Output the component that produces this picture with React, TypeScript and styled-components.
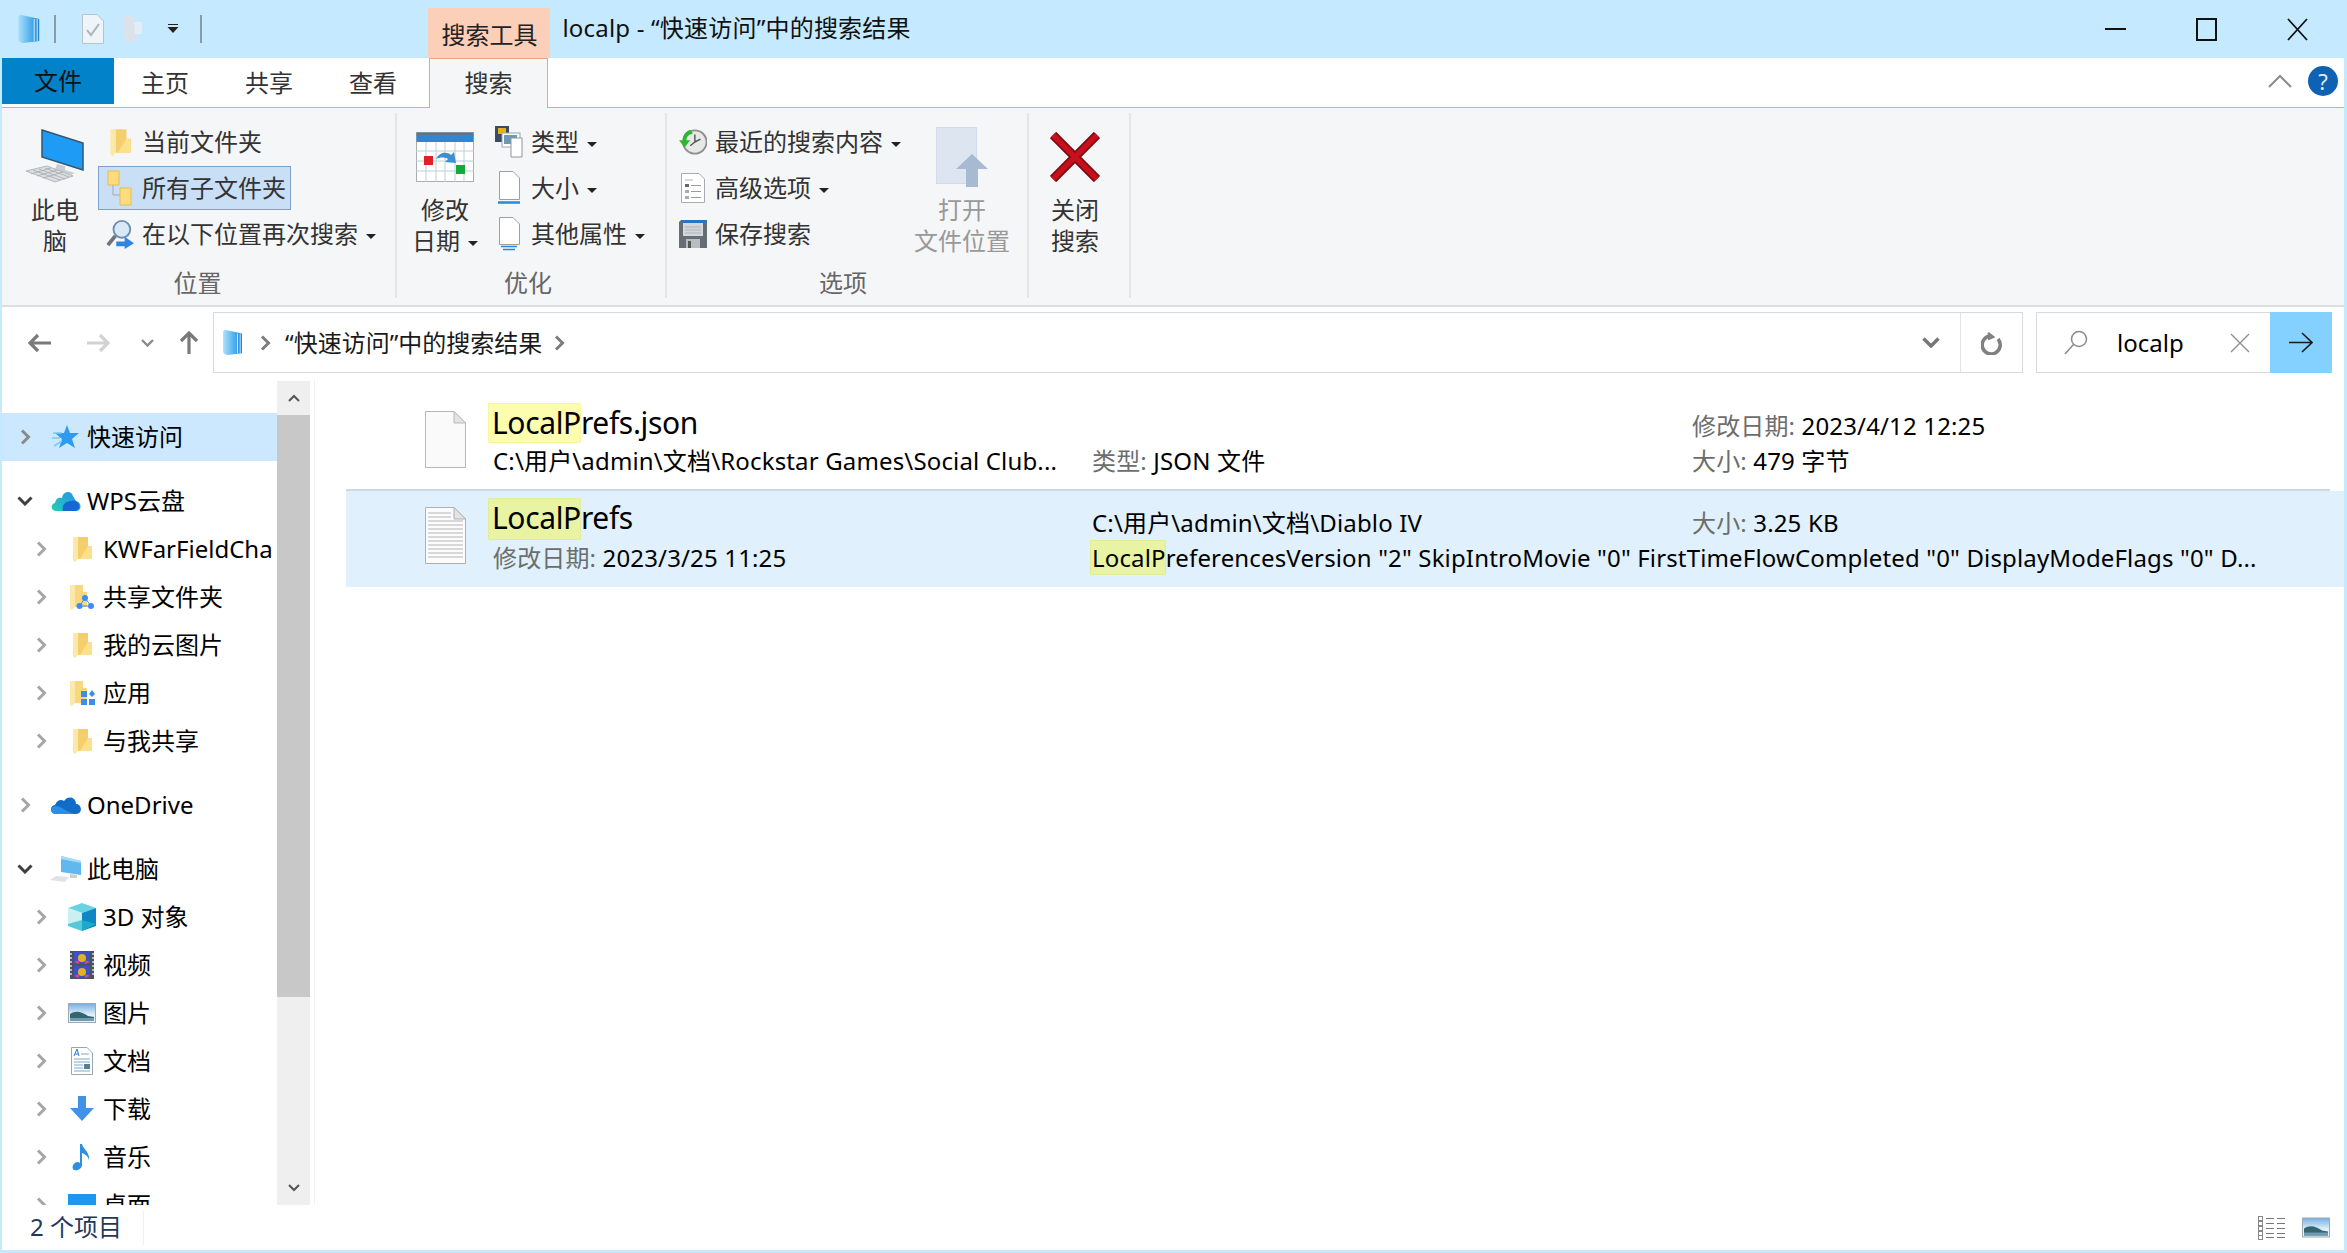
import React from 'react';
import styled, { createGlobalStyle } from 'styled-components';

const GlobalStyle = createGlobalStyle`
  html, body {
    margin: 0;
    padding: 0;
    background: #fff;
    overflow: hidden;
  }
  * {
    box-sizing: border-box;
  }
`;

const Window = styled.div`
  width: 2347px;
  height: 1253px;
  display: flex;
  flex-direction: column;
  overflow: hidden;
  background: #c5e9fe;
  color: #000;
  font-family: 'Noto Sans', 'Noto Sans CJK SC', sans-serif;
  font-size: 24px;
  line-height: 32px;
`;

const TitleBar = styled.div`
  height: 58px;
  flex: none;
  display: flex;
  align-items: center;
  padding-left: 17px;
`;

const TitleSep = styled.span<{ $bare?: boolean }>`
  width: 2px;
  height: 28px;
  background: #8b9ba6;
  margin: ${(p) => (p.$bare ? '0' : '0 26px 0 14px')};
`;

const QatIcon = styled.span<{ $ml?: number }>`
  display: flex;
  margin-left: ${(p) => p.$ml || 0}px;
`;

const ContextTab = styled.div`
  align-self: flex-end;
  width: 122px;
  height: 50px;
  margin-left: 226px;
  background: #fccfb8;
  text-align: center;
  padding-top: 11px;
  color: #222;
`;

const TitleText = styled.div`
  margin-left: 12px;
  margin-bottom: 2px;
  letter-spacing: 0.2px;
  color: #111;
`;

const WinButtons = styled.div`
  margin-left: auto;
  display: flex;
  align-items: center;
  gap: 70px;
  padding-right: 39px;
`;

const Body = styled.div`
  flex: 1;
  min-height: 0;
  margin: 0 3px 3px 2px;
  background: #fff;
  display: flex;
  flex-direction: column;
`;

const TabRow = styled.div`
  height: 50px;
  flex: none;
  display: flex;
  border-bottom: 1px solid #f0a18c;
`;

const FileTab = styled.div`
  width: 112px;
  height: 46px;
  background: #0283c9;
  color: #111;
  text-align: center;
  line-height: 46px;
`;

const Tab = styled.div`
  width: 104px;
  padding-right: 2px;
  text-align: center;
  line-height: 50px;
  color: #333;
`;

const ActiveTab = styled.div`
  width: 119px;
  height: 50px;
  margin-left: 3px;
  background: #f5f6f7;
  border: 1px solid #f0a18c;
  border-bottom: none;
  text-align: center;
  line-height: 48px;
  color: #333;
`;

const TabRight = styled.div`
  margin-left: auto;
  display: flex;
  align-items: center;
  gap: 16px;
  padding: 0 6px 4px 0;
`;

const HelpDot = styled.div`
  width: 30px;
  height: 30px;
  border-radius: 50%;
  background: #0f62b3;
  color: #dfeaf5;
  text-align: center;
  font-size: 22px;
  line-height: 30px;
`;

const Ribbon = styled.div`
  height: 199px;
  flex: none;
  display: flex;
  background: #f5f6f7;
  border-bottom: 2px solid #dcdddf;
  padding-top: 5px;
  color: #333;
`;

const Group = styled.div<{ $w: number }>`
  width: ${(p) => p.$w}px;
  height: 185px;
  padding-top: 6px;
  display: flex;
  flex-direction: column;
  border-right: 2px solid #e4e5e7;
`;

const GroupBody = styled.div`
  height: 150px;
  display: flex;
`;

const GroupLabel = styled.div<{ $pr?: number }>`
  height: 30px;
  line-height: 30px;
  text-align: center;
  padding-right: ${(p) => p.$pr || 0}px;
  color: #666;
`;

const BigButton = styled.div<{ $w: number; $ml: number; $off?: boolean }>`
  width: ${(p) => p.$w}px;
  margin-left: ${(p) => p.$ml}px;
  display: flex;
  flex-direction: column;
  align-items: center;
  color: ${(p) => (p.$off ? '#999' : '#333')};
  line-height: 31px;
  text-align: center;
  white-space: nowrap;
`;

const BigIcon = styled.div`
  height: 75px;
  display: flex;
  align-items: center;
`;

const SmallColumn = styled.div<{ $ml: number; $w?: number }>`
  margin-left: ${(p) => p.$ml}px;
  ${(p) => (p.$w ? `width: ${p.$w}px;` : '')}
  display: flex;
  flex-direction: column;
  align-items: flex-start;
`;

const SmallButton = styled.div<{ $on?: boolean }>`
  height: 44px;
  margin: 1px 0;
  padding: 0 4px 0 7px;
  display: flex;
  align-items: center;
  gap: 8px;
  white-space: nowrap;
  border: 1px solid ${(p) => (p.$on ? '#7da2ce' : 'transparent')};
  background: ${(p) => (p.$on ? '#c8dff6' : 'transparent')};
`;

const SmallIcon = styled.span`
  width: 28px;
  height: 28px;
  display: flex;
  align-items: center;
  justify-content: center;
  flex: none;
`;

const Caret = styled.span`
  display: inline-block;
  width: 0;
  height: 0;
  margin-left: 8px;
  vertical-align: middle;
  border-left: 5px solid transparent;
  border-right: 5px solid transparent;
  border-top: 5px solid #222;
`;

const AddressRow = styled.div`
  height: 73px;
  flex: none;
  display: flex;
  align-items: flex-start;
  padding: 5px 0 0 26px;
`;

const NavButton = styled.span<{ $ml?: number }>`
  height: 61px;
  display: flex;
  align-items: center;
  margin-left: ${(p) => p.$ml || 0}px;
`;

const AddressBox = styled.div`
  width: 1810px;
  height: 61px;
  margin-left: 14px;
  border: 1px solid #d9d9d9;
  display: flex;
  align-items: center;
  padding-left: 8px;
  color: #1a1a1a;
`;

const CrumbArrow = styled.span`
  margin-left: 17px;
  display: flex;
`;

const Crumb = styled.span`
  margin: 0 12px 0 14px;
`;

const AddressEnd = styled.div`
  margin-left: auto;
  display: flex;
  align-items: center;
  height: 100%;
`;

const DropZone = styled.div`
  width: 62px;
  padding-right: 20px;
  display: flex;
  justify-content: flex-end;
`;

const RefreshZone = styled.div`
  width: 62px;
  height: 100%;
  border-left: 1px solid #e3e3e3;
  display: flex;
  align-items: center;
  justify-content: center;
`;

const SearchBox = styled.div`
  width: 296px;
  height: 61px;
  margin-left: 13px;
  border: 1px solid #d9d9d9;
  border-right: none;
  display: flex;
  align-items: center;
  padding-left: 27px;
`;

const SearchText = styled.span`
  margin-left: 29px;
  width: 113px;
`;

const GoButton = styled.div`
  width: 62px;
  height: 61px;
  margin-left: auto;
  background: #84d0fe;
  display: flex;
  align-items: center;
  justify-content: center;
`;

const Main = styled.div`
  flex: 1;
  min-height: 0;
  display: flex;
`;

const Sidebar = styled.div`
  width: 313px;
  flex: none;
  display: flex;
  border-right: 1px solid #f0f0f0;
`;

const NavList = styled.div`
  width: 275px;
  flex: none;
  overflow: hidden;
  padding-top: 33px;
`;

const NavGap = styled.div`
  height: 16px;
`;

const NavRow = styled.div<{ $depth: number; $on?: boolean }>`
  height: 48px;
  display: flex;
  align-items: center;
  padding-left: ${(p) => (p.$depth ? 29 : 13)}px;
  background: ${(p) => (p.$on ? '#cce8ff' : 'transparent')};
  white-space: nowrap;
`;

const Chevron = styled.span`
  width: 20px;
  display: flex;
  justify-content: center;
  flex: none;
`;

const NavIcon = styled.span`
  width: 32px;
  height: 32px;
  margin: 0 5px 0 15px;
  display: flex;
  align-items: center;
  justify-content: center;
  flex: none;
`;

const ScrollBar = styled.div`
  width: 33px;
  flex: none;
  display: flex;
  flex-direction: column;
  background: #efefef;
  margin-top: 1px;
`;

const ScrollEnd = styled.div`
  height: 34px;
  display: flex;
  align-items: center;
  justify-content: center;
`;

const ScrollThumb = styled.div`
  height: 582px;
  background: #c8c8c8;
`;

const ScrollTrack = styled.div`
  flex: 1;
`;

const Results = styled.div`
  flex: 1;
  min-width: 0;
  padding-left: 31px;
`;

const ResultItem = styled.div<{ $on?: boolean }>`
  height: ${(p) => (p.$on ? 96 : 111)}px;
  display: flex;
  align-items: flex-end;
  padding-bottom: ${(p) => (p.$on ? 12 : 11)}px;
  margin-right: ${(p) => (p.$on ? 0 : 14)}px;
  background: ${(p) => (p.$on ? '#e0f0fc' : 'transparent')};
  border-bottom: ${(p) => (p.$on ? 'none' : '2px solid #cdd7e0')};
`;

const FileIconCell = styled.div<{ $on?: boolean }>`
  width: 147px;
  flex: none;
  align-self: flex-start;
  padding: ${(p) => (p.$on ? '16px' : '31px')} 0 0 79px;
  display: flex;
`;

const NameCol = styled.div`
  width: 599px;
  flex: none;
`;

const FileName = styled.div`
  display: flex;
  align-items: flex-start;
  font-size: 30px;
  line-height: 40px;
  letter-spacing: -0.35px;
  white-space: nowrap;
  margin-left: -5px;
`;

const NameHit = styled.span<{ $on?: boolean }>`
  height: ${(p) => (p.$on ? 42 : 40)}px;
  padding-left: 4px;
  border-radius: 2px;
  background: ${(p) => (p.$on ? '#e9f3a4' : '#fdfdb0')};
  box-shadow: inset 0 0 0 1px ${(p) => (p.$on ? '#e2eb96' : '#f6f69a')};
`;

const Line = styled.div`
  height: 35px;
  line-height: 35px;
  letter-spacing: 0.15px;
  white-space: nowrap;
`;

const Key = styled.span`
  color: #6d6d6d;
`;

const Col = styled.div<{ $w?: number }>`
  ${(p) => (p.$w ? `width: ${p.$w}px; flex: none;` : '')}
`;

const SnippetHit = styled.span`
  display: inline-block;
  height: 35px;
  margin-left: -2px;
  padding-left: 2px;
  border-radius: 2px;
  background: #e9f3a4;
  box-shadow: inset 0 0 0 1px #e2eb96;
`;

const StatusBar = styled.div`
  height: 45px;
  flex: none;
  display: flex;
  align-items: center;
  padding-left: 28px;
  color: #1e395b;
`;

const StatusCount = styled.span`
  width: 114px;
  height: 34px;
  border-right: 1px solid #f1f1f1;
`;

const ViewButtons = styled.div`
  margin-left: auto;
  display: flex;
  align-items: center;
  gap: 16px;
  padding-right: 14px;
`;

/* ---- drawings ---- */

const LibraryIcon: React.FC<{ size?: number }> = ({ size = 30 }) => (
  <svg width={size * 0.78} height={size} viewBox="0 0 23 30">
    <defs>
      <linearGradient id="lib" x1="0" x2="1" y1="0" y2="0">
        <stop offset="0" stopColor="#aee0fb" />
        <stop offset="0.7" stopColor="#3fa6ea" />
        <stop offset="1" stopColor="#1f80d0" />
      </linearGradient>
    </defs>
    <path d="M1 3 Q1 1 4 1 L22 5 V27 L6 29 Q1 28 1 25Z" fill="url(#lib)" />
    <path d="M17 5V27M20 5V27" stroke="#d5efff" strokeWidth="1" />
  </svg>
);

const FolderIcon: React.FC<{ w?: number; h?: number }> = ({ w = 20, h = 28 }) => (
  <svg width={w} height={h} viewBox="0 0 20 28">
    <path d="M1 2 H6 L6 24 L3 27 L1 26Z" fill="#fbe8ab" />
    <path d="M6 2 H16 V11 H20 V24 H6Z" fill="#f5cf6c" />
    <path d="M16 11 H20 V24 H8Z" fill="#fde08c" />
  </svg>
);

const SharedFolderIcon = () => (
  <svg width="28" height="28" viewBox="0 0 28 28">
    <path d="M2 2 H7 V24 L4 27 L2 26Z" fill="#fbe8ab" />
    <path d="M7 2 H15 V9 H19 V24 H7Z" fill="#f8d77f" />
    <circle cx="17" cy="15" r="3" fill="#3b8ef0" />
    <circle cx="11.5" cy="23" r="3" fill="#3b8ef0" />
    <circle cx="23" cy="23" r="3" fill="#3b8ef0" />
    <path d="M17 15 L11.5 23 H23Z" fill="none" stroke="#3b8ef0" />
  </svg>
);

const AppsFolderIcon = () => (
  <svg width="28" height="28" viewBox="0 0 28 28">
    <path d="M2 2 H7 V24 L4 27 L2 26Z" fill="#fbe8ab" />
    <path d="M7 2 H15 V9 H19 V24 H7Z" fill="#f8d77f" />
    <rect x="13" y="12" width="6" height="6" fill="#3b8ef0" />
    <path d="M24 11 L27 15 L24 18 L21 15Z" fill="#3b8ef0" />
    <rect x="13" y="20" width="6" height="6" fill="#3b8ef0" />
    <rect x="21" y="20" width="6" height="6" fill="#3b8ef0" />
  </svg>
);

const Star = () => (
  <svg width="28" height="26" viewBox="0 0 28 26">
    <path d="M15 1 L18 9 L27 9 L20 15 L23 24 L15 19 L7 24 L10 15 L3 9 L12 9Z" fill="#2e9bf0" />
    <path d="M1 9 H10 M0 14 H8 M2 22 L10 17" stroke="#7cc7f7" strokeWidth="1.5" />
  </svg>
);

const WpsCloud = () => (
  <svg width="30" height="22" viewBox="0 0 30 22">
    <defs>
      <linearGradient id="wps" x1="0" x2="1" y1="1" y2="0">
        <stop offset="0" stopColor="#1fd1b0" />
        <stop offset="1" stopColor="#2a8bf2" />
      </linearGradient>
    </defs>
    <path d="M5 21 C0 21 -1 14 4 13 C5 8 8 7 11 8 C12 1 20 0 22 6 C24 9 24 10 25 11 C31 12 31 21 25 21Z" fill="url(#wps)" />
    <path d="M12 21 C10 14 16 11 20 11 C24 9 30 13 28 19 L25 21Z" fill="#1467d6" />
  </svg>
);

const OneDriveCloud = () => (
  <svg width="32" height="20" viewBox="0 0 32 20">
    <path d="M6 19 C0 19 -1 11 5 10 C7 5 11 4 14 6 C18 0 26 2 26 9 C32 9 33 19 26 19Z" fill="#0f6cc7" />
    <path d="M6 19 C0 19 -1 12 5 11 C9 11 12 13 15 15 L24 19Z" fill="#2b8fe3" />
  </svg>
);

const PcSmall = () => (
  <svg width="32" height="28" viewBox="0 0 32 28">
    <path d="M11 1 L31 6 V20 L11 17Z" fill="#5fb8ee" />
    <path d="M11 1 L31 6 V8 L11 4Z" fill="#a8dcf7" />
    <path d="M20 19 L27 20 V23 H20Z" fill="#c9cfd4" />
    <path d="M6 21 L19 22 L15 27 L0 25Z" fill="#dfe3e6" />
  </svg>
);

const Cube = () => (
  <svg width="30" height="30" viewBox="0 0 30 30">
    <path d="M15 1 L29 6 L15 11 L1 6Z" fill="#6ad3e3" />
    <path d="M1 6 L15 11 V29 L1 24Z" fill="#c9f1f2" />
    <path d="M15 11 L29 6 V24 L15 29Z" fill="#0f87c5" />
    <path d="M1 22 L15 18 L29 22 L15 29 L1 24Z" fill="#24b7cf" opacity="0.7" />
  </svg>
);

const VideoIcon = () => (
  <svg width="24" height="28" viewBox="0 0 24 28">
    <rect width="24" height="28" fill="#4c5061" />
    <rect x="4" y="1" width="16" height="12" fill="#3c50c8" />
    <rect x="4" y="15" width="16" height="12" fill="#3c50c8" />
    <circle cx="12" cy="7" r="4" fill="#e3b31e" />
    <circle cx="12" cy="21" r="4" fill="#e3b31e" />
    <path d="M4 11 L9 9 L9 13Z M20 11 L15 9 V13Z M4 25 L9 23 V27Z M20 25 L15 23 V27Z" fill="#d8497a" />
    <path d="M1 2V26 M23 2V26" stroke="#d8dce2" strokeWidth="1.5" strokeDasharray="2 2" />
  </svg>
);

const PictureIcon: React.FC<{ w?: number; h?: number }> = ({ w = 28, h = 20 }) => (
  <svg width={w} height={h} viewBox="0 0 28 20">
    <defs>
      <linearGradient id="sky" x1="0" x2="0" y1="0" y2="1">
        <stop offset="0" stopColor="#76aee6" />
        <stop offset="0.6" stopColor="#e3f1f8" />
      </linearGradient>
    </defs>
    <rect x="0.5" y="0.5" width="27" height="19" fill="url(#sky)" stroke="#9fa9b3" />
    <path d="M2 11 C8 7 14 9 20 13 L26 14 V18 H2Z" fill="#37656f" />
    <path d="M2 15 H26 V18 H2Z" fill="#6d9cb4" />
  </svg>
);

const DocIcon = () => (
  <svg width="22" height="28" viewBox="0 0 22 28">
    <path d="M0.5 0.5 H16 L21.5 6 V27.5 H0.5Z" fill="#fff" stroke="#9aa5ad" />
    <path d="M3 9 L6 2 L8 9 M4 7 H7" fill="none" stroke="#2b7bd0" />
    <path d="M10 7 H18 M3 12 H19 M3 15 H19 M3 18 H12 M3 21 H12 M3 24 H19" stroke="#7aa6cf" />
    <rect x="13" y="17" width="6" height="5" fill="#567f93" />
  </svg>
);

const DownloadIcon = () => (
  <svg width="26" height="26" viewBox="0 0 26 26">
    <path d="M9 0 H17 V12 H25 L13 25 L1 12 H9Z" fill="#3f93e6" />
  </svg>
);

const MusicIcon = () => (
  <svg width="20" height="28" viewBox="0 0 20 28">
    <path d="M8 1 L10 1 C11 6 18 9 17 17 C16 13 13 11 10 10 V22 C10 26 5 28 2 27 C-1 25 1 20 5 19 C6 19 7 19 8 20Z" fill="#2c8fe0" />
  </svg>
);

const DesktopIcon = () => (
  <svg width="28" height="22" viewBox="0 0 28 22">
    <rect width="28" height="22" fill="#1f97ee" />
  </svg>
);

const ChevronGlyph: React.FC<{ open?: boolean; color: string }> = ({ open, color }) =>
  open ? (
    <svg width="16" height="10" viewBox="0 0 16 10">
      <path d="M1.5 1.5 L8 8 L14.5 1.5" fill="none" stroke={color} strokeWidth="3" />
    </svg>
  ) : (
    <svg width="11" height="16" viewBox="0 0 11 16">
      <path d="M2 1.5 L8.5 8 L2 14.5" fill="none" stroke={color} strokeWidth="3" />
    </svg>
  );

const FileBlank = () => (
  <svg width="41" height="57" viewBox="0 0 41 57">
    <path d="M0.5 0.5 H29 L40.5 12 V56.5 H0.5Z" fill="#fafafa" stroke="#b8b8b8" />
    <path d="M29 0.5 V12 H40.5Z" fill="#e4e4e4" stroke="#b8b8b8" />
  </svg>
);

const FileLines = () => (
  <svg width="41" height="57" viewBox="0 0 41 57">
    <path d="M0.5 0.5 H29 L40.5 12 V56.5 H0.5Z" fill="#fbfbfb" stroke="#b0b0b0" />
    <path d="M29 0.5 V12 H40.5Z" fill="#e4e4e4" stroke="#b0b0b0" />
    {[6, 10, 14, 18, 22, 26, 30, 34, 38, 42, 46, 50].map((y) => (
      <path key={y} d={y < 14 ? `M3 ${y} H26` : `M3 ${y} H38`} stroke="#b5b5b5" />
    ))}
  </svg>
);

const PcBig = () => (
  <svg width="60" height="55" viewBox="0 0 60 55">
    <path d="M17 1 L58 14 V41 L17 28Z" fill="#1e9bf5" stroke="#33566f" strokeWidth="1.5" />
    <path d="M32 35 L40 37 V41 L50 44 L46 46 L30 41 Z" fill="#c9ced2" />
    <path d="M1 42 L22 37 L48 47 L30 53Z" fill="#dcdfe2" stroke="#b4b8bc" />
    <path d="M8 41 L35 51 M14 40 L40 50 M20 39 L44 48 M6 45 L26 39 M12 47 L32 41 M18 49 L38 43" stroke="#a4a9ae" strokeWidth="0.8" />
  </svg>
);

const CurrentFolder = () => <FolderIcon w={22} h={30} />;

const SubFolders = () => (
  <svg width="26" height="36" viewBox="0 0 26 36">
    <path d="M1 1 H12 V15 H1Z" fill="#fddc7d" stroke="#e2bf55" />
    <path d="M6 15 V25 H13" fill="none" stroke="#a9a9a9" />
    <path d="M13 18 H24 V35 H13Z" fill="#fddc7d" stroke="#e2bf55" />
  </svg>
);

const SearchAgain = () => (
  <svg width="30" height="32" viewBox="0 0 30 32">
    <circle cx="17" cy="11" r="9" fill="#d8e8f6" stroke="#6b8fb0" strokeWidth="2" />
    <path d="M10 18 L2 28" stroke="#6d7379" strokeWidth="4" />
    <path d="M11 24 H20 V19 L30 26 L20 32 V29 H11Z" fill="#2e86e0" />
  </svg>
);

const CalendarIcon = () => (
  <svg width="58" height="50" viewBox="0 0 58 50">
    <rect x="0.5" y="0.5" width="57" height="49" fill="#fff" stroke="#a8adb0" />
    <rect x="0.5" y="0.5" width="57" height="3" fill="#5d7588" />
    <rect x="0.5" y="3" width="57" height="7" fill="#2f86d6" />
    <path d="M10 10V50M20 10V50M29 10V50M39 10V50M48 10V50M0 19H58M0 29H58M0 39H58" stroke="#bcd0d6" />
    <rect x="8" y="24" width="9" height="9" fill="#e21f26" />
    <rect x="40" y="33" width="9" height="9" fill="#16a83a" />
    <path d="M20 27 C24 19 32 20 35 23 L38 20 L40 31 L29 30 L32 27 C29 25 24 25 20 27Z" fill="#3f8fd0" />
  </svg>
);

const TypeIcon = () => (
  <svg width="28" height="32" viewBox="0 0 28 32">
    <rect x="0" y="0" width="14" height="16" fill="#3c4a6a" />
    <rect x="3" y="2" width="8" height="6" fill="#e3b31e" />
    <rect x="7" y="7" width="18" height="14" fill="#fff" stroke="#9aa5ad" />
    <rect x="9" y="9" width="13" height="9" fill="#6f98b4" />
    <path d="M16 12 H27 V31 H16Z" fill="#fff" stroke="#8f979e" />
  </svg>
);

const SizeIcon = () => (
  <svg width="24" height="34" viewBox="0 0 24 34">
    <path d="M2.5 0.5 H16 L22.5 7 V28.5 H2.5Z" fill="#fff" stroke="#9aa0a5" />
    <path d="M1 31.5 H23" stroke="#2e86d8" strokeWidth="2.5" />
  </svg>
);

const OtherIcon = () => (
  <svg width="22" height="34" viewBox="0 0 22 34">
    <path d="M1.5 0.5 H15 L21.5 7 V27.5 H1.5Z" fill="#fff" stroke="#9aa0a5" />
    <path d="M3 29.5 H19 M5 32.5 H17" stroke="#2e86d8" strokeWidth="1.5" />
  </svg>
);

const RecentIcon = () => (
  <svg width="30" height="28" viewBox="0 0 30 28">
    <circle cx="17" cy="14" r="12.5" fill="#e8e8e8" stroke="#8f8f8f" strokeWidth="2" />
    <path d="M17 6 V14 L23 11 M17 14 L12 18" fill="none" stroke="#555" strokeWidth="1.5" />
    <path d="M12 1 L15 5 C10 6 8 9 8 12 H12 L6 20 L0 12 H4 C4 7 7 3 12 1Z" fill="#2fb52f" />
  </svg>
);

const AdvancedIcon = () => (
  <svg width="24" height="30" viewBox="0 0 24 30">
    <path d="M0.5 0.5 H18 L23.5 6 V29.5 H0.5Z" fill="#fff" stroke="#a8adb2" />
    <path d="M4 7 H12" stroke="#b5b5b5" />
    <rect x="4" y="11" width="4" height="3" fill="#666" />
    <rect x="4" y="17" width="4" height="3" fill="#aaa" />
    <rect x="4" y="23" width="4" height="3" fill="#aaa" />
    <path d="M10 12.5 H20 M10 18.5 H20 M10 24.5 H20" stroke="#9a9a9a" />
  </svg>
);

const SaveIcon = () => (
  <svg width="28" height="28" viewBox="0 0 28 28">
    <path d="M2 0 H28 V28 H0 V2Z" fill="#666d75" />
    <rect x="2" y="0" width="26" height="3" fill="#2a74c4" />
    <rect x="4" y="3" width="20" height="13" fill="#d3d6da" />
    <path d="M6 7 H22 M6 10 H22 M6 13 H22" stroke="#aeb3b8" />
    <rect x="7" y="19" width="14" height="9" fill="#b9bcc0" />
    <rect x="9" y="21" width="3" height="7" fill="#555" />
  </svg>
);

const OpenLocation = () => (
  <svg width="52" height="60" viewBox="0 0 52 60">
    <rect x="0.5" y="0.5" width="40" height="56" fill="#dde5f1" stroke="#d2dbea" />
    <path d="M36 27 L52 42 H42 V60 H30 V42 H20Z" fill="#a8b9d2" />
  </svg>
);

const CloseBig = () => (
  <svg width="50" height="50" viewBox="0 0 50 50">
    <path d="M3 3 L47 47 M47 3 L3 47" stroke="#7a0a12" strokeWidth="9" />
    <path d="M3 3 L47 47 M47 3 L3 47" stroke="#c80f1c" strokeWidth="5.5" />
  </svg>
);

const Qat = {
  Check: () => (
    <svg width="22" height="30" viewBox="0 0 22 30">
      <path d="M0.5 0.5 H15 L21.5 7 V29.5 H0.5Z" fill="#eef4f8" stroke="#b9c3cb" />
      <path d="M5 16 L9 21 L17 10" fill="none" stroke="#a9b4bc" strokeWidth="2" />
    </svg>
  ),
  Pin: () => (
    <svg width="23" height="30" viewBox="0 0 23 30">
      <path d="M1 2 H12 L14 28 H3Z" fill="#dbe2ea" />
      <path d="M12 8 H20 V20 H13Z" fill="#e5ecf3" />
    </svg>
  ),
  Drop: () => (
    <svg width="12" height="10" viewBox="0 0 12 10">
      <path d="M1 0.5 H11" stroke="#222" />
      <path d="M0.5 3 H11.5 L6 9Z" fill="#222" />
    </svg>
  ),
};

const ArrowLeft: React.FC<{ color: string; flip?: boolean }> = ({ color, flip }) => (
  <svg width="24" height="20" viewBox="0 0 24 20">
    <g transform={flip ? 'translate(24 0) scale(-1 1)' : undefined}>
      <path d="M10 2 L2 10 L10 18 M2 10 H23" fill="none" stroke={color} strokeWidth="3.2" />
    </g>
  </svg>
);

const ArrowUp = () => (
  <svg width="20" height="23" viewBox="0 0 20 23">
    <path d="M2 10 L10 2 L18 10 M10 2 V23" fill="none" stroke="#7a7a7a" strokeWidth="3.2" />
  </svg>
);

const Refresh = () => (
  <svg width="22" height="24" viewBox="0 0 22 24">
    <path d="M7 2 L12 6 L7 8" fill="none" stroke="#808080" strokeWidth="2.5" />
    <path d="M9 5 A9 9 0 1 0 17 8" fill="none" stroke="#808080" strokeWidth="3.5" />
  </svg>
);

const navItems: {
  label: string;
  icon: React.ReactNode;
  depth: number;
  open?: boolean;
  on?: boolean;
  gapBefore?: boolean;
  chevron: string;
}[] = [
  { label: '快速访问', icon: <Star />, depth: 0, on: true, chevron: '#8a8a8a' },
  { label: 'WPS云盘', icon: <WpsCloud />, depth: 0, open: true, gapBefore: true, chevron: '#404040' },
  { label: 'KWFarFieldCha', icon: <FolderIcon />, depth: 1, chevron: '#a6a6a6' },
  { label: '共享文件夹', icon: <SharedFolderIcon />, depth: 1, chevron: '#a6a6a6' },
  { label: '我的云图片', icon: <FolderIcon />, depth: 1, chevron: '#a6a6a6' },
  { label: '应用', icon: <AppsFolderIcon />, depth: 1, chevron: '#a6a6a6' },
  { label: '与我共享', icon: <FolderIcon />, depth: 1, chevron: '#a6a6a6' },
  { label: 'OneDrive', icon: <OneDriveCloud />, depth: 0, gapBefore: true, chevron: '#a6a6a6' },
  { label: '此电脑', icon: <PcSmall />, depth: 0, open: true, gapBefore: true, chevron: '#404040' },
  { label: '3D 对象', icon: <Cube />, depth: 1, chevron: '#a6a6a6' },
  { label: '视频', icon: <VideoIcon />, depth: 1, chevron: '#a6a6a6' },
  { label: '图片', icon: <PictureIcon />, depth: 1, chevron: '#a6a6a6' },
  { label: '文档', icon: <DocIcon />, depth: 1, chevron: '#a6a6a6' },
  { label: '下载', icon: <DownloadIcon />, depth: 1, chevron: '#a6a6a6' },
  { label: '音乐', icon: <MusicIcon />, depth: 1, chevron: '#a6a6a6' },
  { label: '桌面', icon: <DesktopIcon />, depth: 1, chevron: '#a6a6a6' },
];

const App: React.FC = () => (
  <Window>
    <GlobalStyle />
    <TitleBar>
      <LibraryIcon />
      <TitleSep />
      <Qat.Check />
      <QatIcon $ml={18}>
        <Qat.Pin />
      </QatIcon>
      <QatIcon $ml={22}>
        <Qat.Drop />
      </QatIcon>
      <QatIcon $ml={21}>
        <TitleSep $bare />
      </QatIcon>
      <ContextTab>搜索工具</ContextTab>
      <TitleText>localp - “快速访问”中的搜索结果</TitleText>
      <WinButtons>
        <svg width="21" height="2" viewBox="0 0 21 2">
          <rect width="21" height="2" fill="#111" />
        </svg>
        <svg width="21" height="23" viewBox="0 0 21 23">
          <rect x="1" y="1" width="19" height="21" fill="none" stroke="#111" strokeWidth="2" />
        </svg>
        <svg width="21" height="23" viewBox="0 0 21 23">
          <path d="M1 1 L20 22 M20 1 L1 22" stroke="#111" strokeWidth="1.8" />
        </svg>
      </WinButtons>
    </TitleBar>
    <Body>
      <TabRow>
        <FileTab>文件</FileTab>
        <Tab>主页</Tab>
        <Tab>共享</Tab>
        <Tab>查看</Tab>
        <ActiveTab>搜索</ActiveTab>
        <TabRight>
          <svg width="24" height="14" viewBox="0 0 24 14">
            <path d="M1 13 L12 2 L23 13" fill="none" stroke="#8c8c8c" strokeWidth="2" />
          </svg>
          <HelpDot>?</HelpDot>
        </TabRight>
      </TabRow>
      <Ribbon>
        <Group $w={395}>
          <GroupBody>
            <BigButton $w={70} $ml={18}>
              <BigIcon>
                <PcBig />
              </BigIcon>
              此电
              <br />脑
            </BigButton>
            <SmallColumn $ml={8}>
              <SmallButton>
                <SmallIcon>
                  <CurrentFolder />
                </SmallIcon>
                当前文件夹
              </SmallButton>
              <SmallButton $on>
                <SmallIcon>
                  <SubFolders />
                </SmallIcon>
                所有子文件夹
              </SmallButton>
              <SmallButton>
                <SmallIcon>
                  <SearchAgain />
                </SmallIcon>
                <span>
                  在以下位置再次搜索
                  <Caret />
                </span>
              </SmallButton>
            </SmallColumn>
          </GroupBody>
          <GroupLabel $pr={2}>位置</GroupLabel>
        </Group>
        <Group $w={270}>
          <GroupBody>
            <BigButton $w={76} $ml={10}>
              <BigIcon>
                <CalendarIcon />
              </BigIcon>
              修改
              <span>
                日期
                <Caret />
              </span>
            </BigButton>
            <SmallColumn $ml={4}>
              <SmallButton>
                <SmallIcon>
                  <TypeIcon />
                </SmallIcon>
                <span>
                  类型
                  <Caret />
                </span>
              </SmallButton>
              <SmallButton>
                <SmallIcon>
                  <SizeIcon />
                </SmallIcon>
                <span>
                  大小
                  <Caret />
                </span>
              </SmallButton>
              <SmallButton>
                <SmallIcon>
                  <OtherIcon />
                </SmallIcon>
                <span>
                  其他属性
                  <Caret />
                </span>
              </SmallButton>
            </SmallColumn>
          </GroupBody>
          <GroupLabel $pr={6}>优化</GroupLabel>
        </Group>
        <Group $w={362}>
          <GroupBody>
            <SmallColumn $ml={4} $w={236}>
              <SmallButton>
                <SmallIcon>
                  <RecentIcon />
                </SmallIcon>
                <span>
                  最近的搜索内容
                  <Caret />
                </span>
              </SmallButton>
              <SmallButton>
                <SmallIcon>
                  <AdvancedIcon />
                </SmallIcon>
                <span>
                  高级选项
                  <Caret />
                </span>
              </SmallButton>
              <SmallButton>
                <SmallIcon>
                  <SaveIcon />
                </SmallIcon>
                保存搜索
              </SmallButton>
            </SmallColumn>
            <BigButton $w={110} $ml={0} $off>
              <BigIcon>
                <OpenLocation />
              </BigIcon>
              打开
              <br />
              文件位置
            </BigButton>
          </GroupBody>
          <GroupLabel $pr={8}>选项</GroupLabel>
        </Group>
        <Group $w={102}>
          <GroupBody>
            <BigButton $w={92} $ml={0}>
              <BigIcon>
                <CloseBig />
              </BigIcon>
              关闭
              <br />
              搜索
            </BigButton>
          </GroupBody>
        </Group>
      </Ribbon>
      <AddressRow>
        <NavButton>
          <ArrowLeft color="#7a7a7a" />
        </NavButton>
        <NavButton $ml={34}>
          <ArrowLeft color="#d2d2d2" flip />
        </NavButton>
        <NavButton $ml={31}>
          <svg width="13" height="8" viewBox="0 0 13 8">
            <path d="M1 1 L6.5 6.5 L12 1" fill="none" stroke="#8a8a8a" strokeWidth="2.4" />
          </svg>
        </NavButton>
        <NavButton $ml={25}>
          <ArrowUp />
        </NavButton>
        <AddressBox>
          <LibraryIcon size={27} />
          <CrumbArrow>
            <ChevronGlyph color="#7d7d7d" />
          </CrumbArrow>
          <Crumb>“快速访问”中的搜索结果</Crumb>
          <ChevronGlyph color="#7d7d7d" />
          <AddressEnd>
            <DropZone>
              <svg width="18" height="11" viewBox="0 0 18 11">
                <path d="M1.5 1.5 L9 9 L16.5 1.5" fill="none" stroke="#777" strokeWidth="3.5" />
              </svg>
            </DropZone>
            <RefreshZone>
              <Refresh />
            </RefreshZone>
          </AddressEnd>
        </AddressBox>
        <SearchBox>
          <svg width="24" height="25" viewBox="0 0 24 25">
            <circle cx="15" cy="9" r="7.5" fill="none" stroke="#8a8a8a" strokeWidth="1.5" />
            <path d="M9.5 14.5 L1 24" stroke="#8a8a8a" strokeWidth="1.5" />
          </svg>
          <SearchText>localp</SearchText>
          <svg width="20" height="20" viewBox="0 0 20 20">
            <path d="M1 1 L19 19 M19 1 L1 19" stroke="#8f8f8f" strokeWidth="1.4" />
          </svg>
          <GoButton>
            <svg width="24" height="21" viewBox="0 0 24 21">
              <path d="M13 1 L23 10.5 L13 20 M23 10.5 H0" fill="none" stroke="#1a1a1a" strokeWidth="1.6" />
            </svg>
          </GoButton>
        </SearchBox>
      </AddressRow>
      <Main>
        <Sidebar>
          <NavList>
            {navItems.map((item) => (
              <React.Fragment key={item.label}>
                {item.gapBefore && <NavGap />}
                <NavRow $depth={item.depth} $on={item.on}>
                  <Chevron>
                    <ChevronGlyph open={item.open} color={item.chevron} />
                  </Chevron>
                  <NavIcon>{item.icon}</NavIcon>
                  {item.label}
                </NavRow>
              </React.Fragment>
            ))}
          </NavList>
          <ScrollBar>
            <ScrollEnd>
              <svg width="12" height="8" viewBox="0 0 12 8">
                <path d="M1 7 L6 2 L11 7" fill="none" stroke="#555" strokeWidth="2" />
              </svg>
            </ScrollEnd>
            <ScrollThumb />
            <ScrollTrack />
            <ScrollEnd>
              <svg width="12" height="8" viewBox="0 0 12 8">
                <path d="M1 1 L6 6 L11 1" fill="none" stroke="#555" strokeWidth="2" />
              </svg>
            </ScrollEnd>
          </ScrollBar>
        </Sidebar>
        <Results>
          <ResultItem>
            <FileIconCell>
              <FileBlank />
            </FileIconCell>
            <NameCol>
              <FileName>
                <NameHit>LocalP</NameHit>
                <span>refs.json</span>
              </FileName>
              <Line>C:\用户\admin\文档\Rockstar Games\Social Club...</Line>
            </NameCol>
            <Col $w={600}>
              <Line>
                <Key>类型:</Key> JSON 文件
              </Line>
            </Col>
            <Col>
              <Line>
                <Key>修改日期:</Key> 2023/4/12 12:25
              </Line>
              <Line>
                <Key>大小:</Key> 479 字节
              </Line>
            </Col>
          </ResultItem>
          <ResultItem $on>
            <FileIconCell $on>
              <FileLines />
            </FileIconCell>
            <NameCol>
              <FileName>
                <NameHit $on>LocalP</NameHit>
                <span>refs</span>
              </FileName>
              <Line>
                <Key>修改日期:</Key> 2023/3/25 11:25
              </Line>
            </NameCol>
            <Col $w={600}>
              <Line>C:\用户\admin\文档\Diablo IV</Line>
              <Line>
                <SnippetHit>LocalP</SnippetHit>
                referencesVersion "2" SkipIntroMovie "0" FirstTimeFlowCompleted "0" DisplayModeFlags "0" D...
              </Line>
            </Col>
            <Col>
              <Line>
                <Key>大小:</Key> 3.25 KB
              </Line>
              <Line />
            </Col>
          </ResultItem>
        </Results>
      </Main>
      <StatusBar>
        <StatusCount>2 个项目</StatusCount>
        <ViewButtons>
          <svg width="28" height="24" viewBox="0 0 28 24">
            {[1, 6, 11, 16, 20].map((y) => (
              <g key={y}>
                <rect x="0.5" y={y - 0.5} width="4" height="4" fill="#fff" stroke="#888" />
                <path d={`M8 ${y + 1.5} H16 M19 ${y + 1.5} H27`} stroke="#777" />
              </g>
            ))}
          </svg>
          <PictureIcon w={28} h={21} />
        </ViewButtons>
      </StatusBar>
    </Body>
  </Window>
);

export default App;
